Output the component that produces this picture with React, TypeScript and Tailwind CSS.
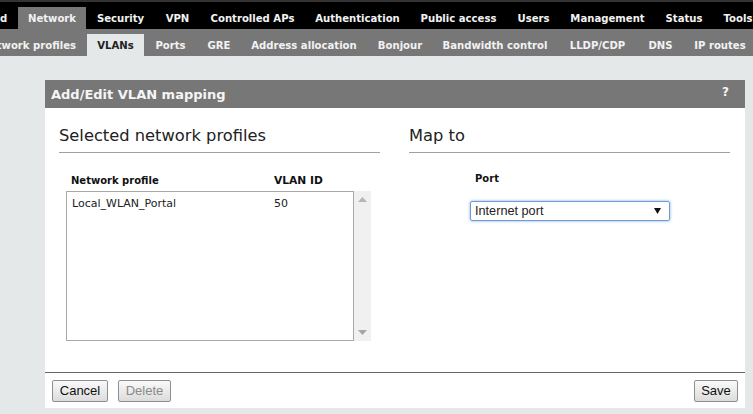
const dv = "font-['DejaVu_Sans',Verdana,sans-serif]";
const top = [
  ["Network", "w-[68px] bg-[#777]"],
  ["Security", "w-[69px]"],
  ["VPN", "w-[45px]"],
  ["Controlled APs", "w-[105px]"],
  ["Authentication", "w-[105px]"],
  ["Public access", "w-[97px]"],
  ["Users", "w-[53px]"],
  ["Management", "w-[95px]"],
  ["Status", "w-[58px]"],
  ["Tools", "w-[50px]"],
];
const sub = [
  ["VLANs", "w-[57px] bg-[#e4e8e9] text-[#222]"],
  ["Ports", "w-[53px]"],
  ["GRE", "w-[44px]"],
  ["Address allocation", "w-[126px]"],
  ["Bonjour", "w-[66px]"],
  ["Bandwidth control", "w-[124px]"],
  ["LLDP/CDP", "w-[81px]"],
  ["DNS", "w-[45px]"],
  ["IP routes", "w-[74px]"],
];

function Btn({ children, disabled, width }: { children: string; disabled?: boolean; width: string }) {
  return (
    <button className={`${width} h-[22px] rounded-[2px] border border-[#8f8f8f] bg-gradient-to-b from-[#fafafa] to-[#dcdcdc] text-[13px] leading-[20px] font-['Liberation_Sans',Arial,sans-serif] ${disabled ? "text-[#8a8a8a]" : "text-[#111]"}`}>
      {children}
    </button>
  );
}

export default function App() {
  return (
    <div className={`w-[753px] h-[414px] overflow-hidden bg-[#e4e8e9] flex flex-col ${dv}`}>
      <div className="h-[2px] bg-[#333]" />
      <div className="h-[27px] bg-black flex items-end overflow-hidden shrink-0 text-[10.1px] font-bold text-[#f2f2f2]">
        <span className="w-[18px] h-[22px] leading-[23px] pr-[11px] text-right shrink-0">d</span>
        {top.map(([t, c]) => (
          <span key={t} className={`h-[22px] leading-[23px] text-center whitespace-nowrap shrink-0 ${c}`}>{t}</span>
        ))}
      </div>
      <div className="h-[27px] bg-[#777] flex items-end overflow-hidden shrink-0 text-[10.1px] font-bold text-[#f2f2f2]">
        <span className="ml-[-20px] w-[107px] h-[22px] leading-[23px] pr-[11px] text-right whitespace-nowrap shrink-0">Network profiles</span>
        {sub.map(([t, c]) => (
          <span key={t} className={`h-[22px] leading-[23px] text-center whitespace-nowrap shrink-0 ${c}`}>{t}</span>
        ))}
      </div>
      <div className="mt-[24px] ml-[45px] w-[700px] h-[328px] bg-white flex flex-col shrink-0">
        <div className="h-[28px] bg-[#777] flex items-center justify-between pl-[6px] pr-[16px] pt-[1px] text-[13px] font-bold text-[#f5f5f5]">
          <span>Add/Edit VLAN mapping</span>
          <span className="text-[12px] -mt-[5px]">?</span>
        </div>
        <div className="flex-1 flex px-[14px] gap-[29px]">
          <div className="w-[321px]">
            <div className="h-[45px] border-b border-[#a0a0a0] pt-[16px] text-[16.3px] leading-[24px] text-[#222]">Selected network profiles</div>
            <div className="flex pt-[21px] pl-[12px] h-[38px] text-[10px] leading-[14px] font-bold text-[#111]">
              <span className="w-[203px]">Network profile</span>
              <span className="text-[10.7px]">VLAN ID</span>
            </div>
            <div className="flex ml-[7px] w-[305px] h-[150px]">
              <div className="w-[288px] border border-[#a8a8a8] flex pl-[5px] pt-[5px] text-[11px] leading-[14px] text-[#222]">
                <span className="w-[202px]">Local_WLAN_Portal</span>
                <span>50</span>
              </div>
              <div className="flex-1 bg-[#f0f0f0] flex flex-col items-center justify-between py-[6px]">
                <svg width="9" height="5" viewBox="0 0 9 5"><path d="M4.5 0L9 5H0z" fill="#b5b5b5" /></svg>
                <svg width="9" height="5" viewBox="0 0 9 5"><path d="M4.5 5L9 0H0z" fill="#a5a5a5" /></svg>
              </div>
            </div>
          </div>
          <div className="w-[321px]">
            <div className="h-[45px] border-b border-[#a0a0a0] pt-[16px] text-[16.3px] leading-[24px] text-[#222]">Map to</div>
            <div className="pl-[66px] pt-[19px] h-[48px] text-[10px] leading-[14px] font-bold text-[#111]">Port</div>
            <div className="ml-[61px] w-[200px] h-[20px] rounded-[2px] border border-[#6f9bd6] shadow-[0_0_3px_#7fa8e0] flex items-center justify-between pl-[4px] pr-[8px] text-[12.7px] text-[#222] font-['Liberation_Sans',Arial,sans-serif]">
              <span className="pt-[1px]">Internet port</span>
              <svg width="7" height="6" viewBox="0 0 7 6"><path d="M0 0H7L3.5 6z" fill="#111" /></svg>
            </div>
          </div>
        </div>
        <div className="h-[36px] border-t border-[#666] flex items-start pt-[7px] pl-[7px] pr-[7px] gap-[10px]">
          <Btn width="w-[56px]">Cancel</Btn>
          <Btn width="w-[53px]" disabled>Delete</Btn>
          <div className="flex-1" />
          <Btn width="w-[44px]">Save</Btn>
        </div>
      </div>
    </div>
  );
}
